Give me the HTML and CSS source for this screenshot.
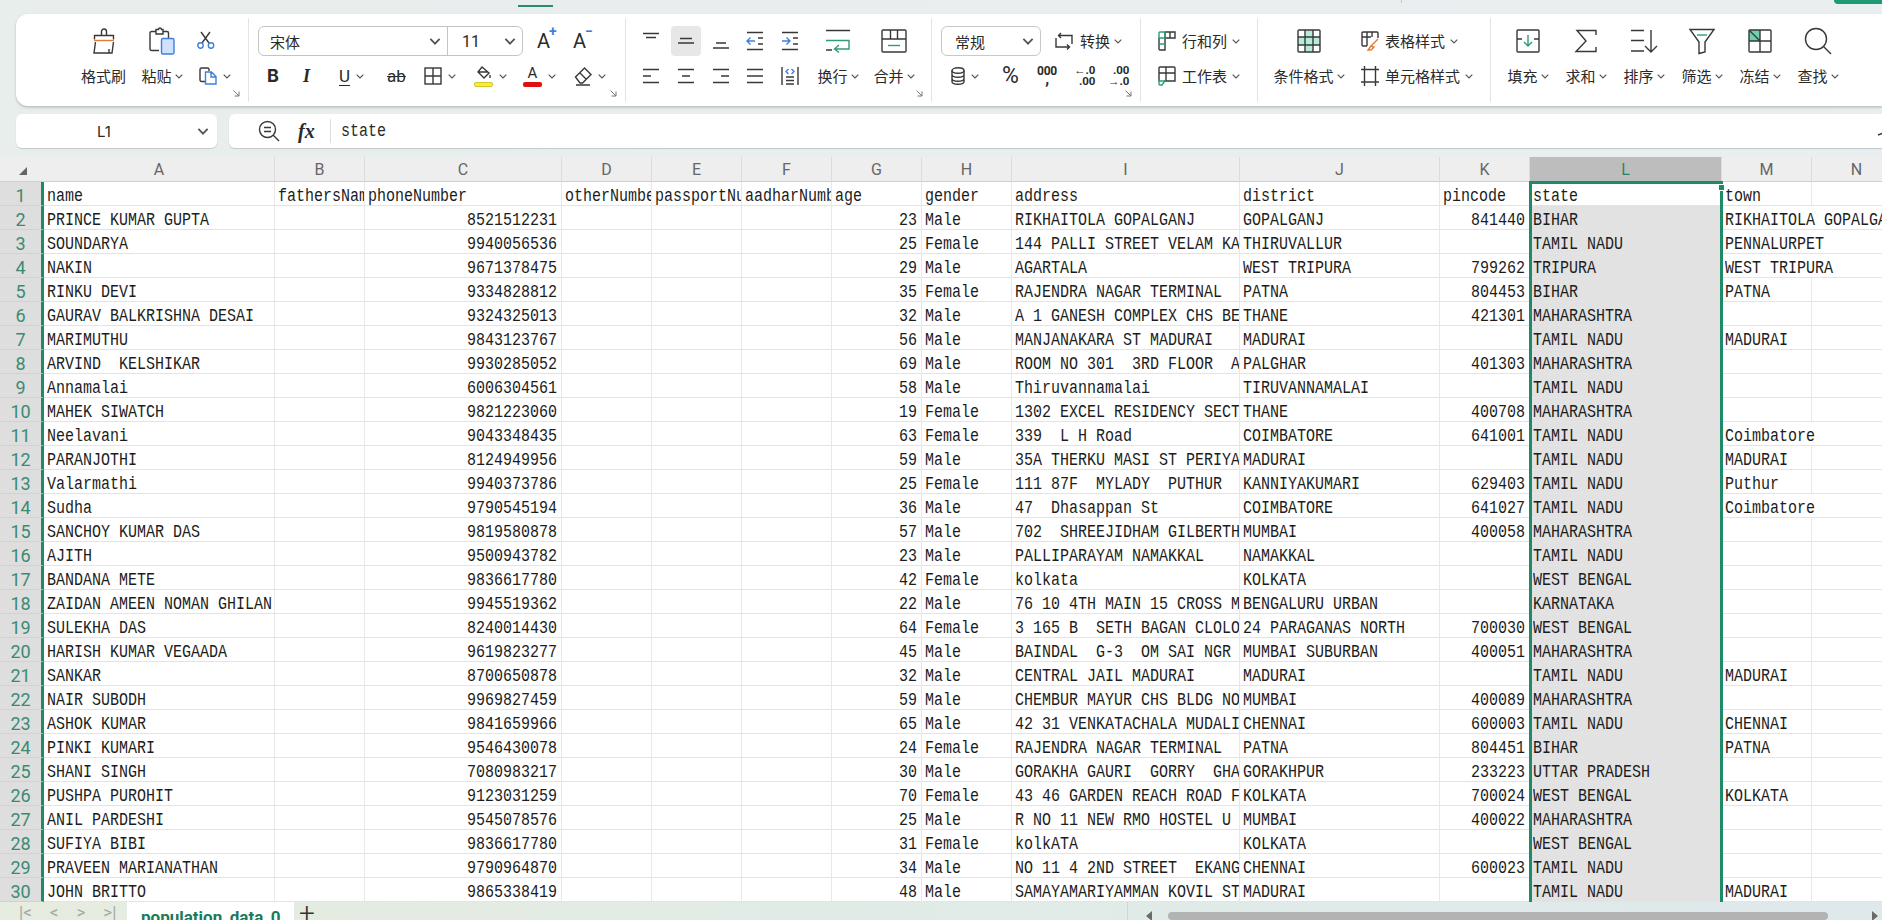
FILE: index.html
```html
<!DOCTYPE html>
<html lang="en">
<head>
<meta charset="utf-8">
<title>population_data_0</title>
<link rel="stylesheet" href="styles.css">
</head>
<body>
<svg class="defs" aria-hidden="true">
  <symbol id="c" viewBox="0 0 8 5"><path d="M.7.7 4 4 7.3.7"/></symbol>
  <symbol id="l" viewBox="0 0 7 7"><path d="M.5.5 6 6M6 1.5V6H1.5"/></symbol>
</svg>
<div class="topstrip"><i class="tabmark"></i><i class="tick"></i><i class="corner"></i></div>

<section class="ribbon">
  <div class="grp g1">
    <svg class="ic" width="24" height="26" viewBox="0 0 24 26"><path d="M9.5 7V3.5a2.5 2.5 0 0 1 5 0V7M2.5 11.500V7.500h19V11.500M3.500 14 2 25h15v-4M17 25h3l1.500-11"/><path class="or" d="M2 12.500h20"/></svg>
    <svg class="ic" width="26" height="28" viewBox="0 0 26 28"><path d="M10 23.500H2.500a1.500 1.500 0 0 1-1.500-1.500V6a1.500 1.500 0 0 1 1.500-1.500H7M14 4.500h4a1.500 1.500 0 0 1 1.500 1.500v5M7 2.500h2.500a1.500 1.500 0 0 1 3 0H14V7H7z"/><rect class="bl" x="12.500" y="11.500" width="12.500" height="15.500" rx="1.500"/></svg>
    <svg class="ic scis" width="18" height="18" viewBox="0 0 18 18"><path d="M4 1l8 11M13 1 5 12"/><circle class="bs" cx="3.500" cy="14.500" r="2.700"/><circle class="bs" cx="14" cy="14.500" r="2.700"/></svg>
    <span class="lb">格式刷</span>
    <span class="it"><span class="lb">粘贴</span><svg class="ch"><use href="#c"/></svg></span>
    <span class="it i7"><svg class="ic" width="18" height="18" viewBox="0 0 18 18"><path d="M7 14.500H2.500A1.500 1.500 0 0 1 1 13V2.500A1.500 1.500 0 0 1 2.500 1h6A1.500 1.500 0 0 1 10 2.500V4"/><path class="bs" d="M6.500 5h6l4.500 4.500V17H6.500zM12 5v5h5"/></svg><svg class="ch"><use href="#c"/></svg></span>
    <svg class="lau"><use href="#l"/></svg>
  </div>

  <div class="grp g2">
    <div class="rw r1">
      <div class="combo"><span class="cf">宋体<svg class="cb"><use href="#c"/></svg></span><span class="cs">11<svg class="cb"><use href="#c"/></svg></span></div>
      <span class="aa">A<sup class="bt">+</sup></span><span class="aa am">A<sup class="bt">−</sup></span>
    </div>
    <div class="rw r2">
      <span class="tb bold">B</span>
      <span class="tb ital">I</span>
      <span class="it"><span class="tb under">U</span><svg class="ch"><use href="#c"/></svg></span>
      <span class="tb strike">ab</span>
      <span class="it"><svg class="ic" width="18" height="18" viewBox="0 0 18 18"><rect x="1" y="1" width="16" height="16"/><path d="M9 1v16M1 9h16"/></svg><svg class="ch"><use href="#c"/></svg></span>
      <span class="it"><span class="barred"><svg class="ic" width="16" height="14" viewBox="0 0 16 14"><path d="M6 1l7 6-5 5-6-6zM3 6h9"/><path d="M14 9v3"/></svg><i class="bar yl"></i></span><svg class="ch"><use href="#c"/></svg></span>
      <span class="it"><span class="barred"><span class="fa">A</span><i class="bar rd"></i></span><svg class="ch"><use href="#c"/></svg></span>
      <span class="it"><svg class="ic" width="18" height="20" viewBox="0 0 18 20"><path d="M1.500 11 10.500 2 17 8.500 8.500 17H6zM5.500 6.500 12.500 13.500M2 19h14"/></svg><svg class="ch"><use href="#c"/></svg></span>
    </div>
    <svg class="lau"><use href="#l"/></svg>
  </div>

  <div class="grp g3">
    <svg class="ic" width="18" height="18" viewBox="0 0 18 18"><path d="M1 1.500h16M4 5.500h10"/></svg>
    <span class="hl"><svg class="ic" width="18" height="18" viewBox="0 0 18 18"><path d="M3 6.500h12M1 11h16"/></svg></span>
    <svg class="ic" width="18" height="18" viewBox="0 0 18 18"><path d="M4 11h10M1 16h16"/></svg>
    <svg class="ic" width="18" height="20" viewBox="0 0 18 20"><path d="M1 1.500h16M1 18.500h16M12 7h5M12 13h5"/><path class="bs" d="M9 10H1M4.500 6.500 1 10l3.500 3.500"/></svg>
    <svg class="ic" width="18" height="20" viewBox="0 0 18 20"><path d="M1 1.500h16M1 18.500h16M12 7h5M12 13h5"/><path class="bs" d="M1 10h8M5.500 6.500 9 10l-3.500 3.500"/></svg>
    <svg class="ic" width="26" height="24" viewBox="0 0 26 24"><path d="M1 1.500h24M1 21h6"/><path class="gr" d="M1 11.500h23V20H10M14 16l-4.500 4 4.500 3.500"/></svg>
    <svg class="ic" width="26" height="24" viewBox="0 0 26 24"><rect x="1" y="1" width="24" height="22" rx="1"/><path d="M1 10h24M9.500 1v9M16.500 1v9"/><path class="gr" d="M7 16.500h12"/></svg>

    <svg class="ic" width="18" height="16" viewBox="0 0 18 16"><path d="M1 1.500h16M1 8h8M1 14.500h16"/></svg>
    <svg class="ic" width="18" height="16" viewBox="0 0 18 16"><path d="M1 1.500h16M5 8h8M1 14.500h16"/></svg>
    <svg class="ic" width="18" height="16" viewBox="0 0 18 16"><path d="M1 1.500h16M9 8h8M1 14.500h16"/></svg>
    <svg class="ic" width="18" height="16" viewBox="0 0 18 16"><path d="M1 1.500h16M1 8h16M1 14.500h16"/></svg>
    <svg class="ic" width="18" height="18" viewBox="0 0 18 18"><path d="M1 0v18M17 0v18M5 10h8M5 13.500h8M5 17h8"/><path class="bs" d="M7.500 2 5 4.500 7.500 7M10.500 2 13 4.500 10.500 7"/></svg>
    <span class="it"><span class="lb">换行</span><svg class="ch"><use href="#c"/></svg></span>
    <span class="it"><span class="lb">合并</span><svg class="ch"><use href="#c"/></svg></span>
    <svg class="lau"><use href="#l"/></svg>
  </div>

  <div class="grp g4">
    <div class="rw r1">
      <div class="sel"><span>常规</span><svg class="cb"><use href="#c"/></svg></div>
      <svg class="ic conv" width="18" height="18" viewBox="0 0 18 18"><path d="M4 3.500h13V12M14 15H1V6M6 1 3.500 3.500 6 6M12 12.500 14.500 15 12 17.500"/></svg>
      <span class="lb">转换</span><svg class="ch"><use href="#c"/></svg>
    </div>
    <div class="rw r2">
      <span class="it"><svg class="ic" width="14" height="18" viewBox="0 0 14 18"><ellipse cx="7" cy="3.500" rx="6" ry="2.700"/><path d="M1 3.500v11c0 1.500 2.700 2.700 6 2.700s6-1.200 6-2.700v-11M1 7.500c0 1.500 2.700 2.700 6 2.700s6-1.200 6-2.700M1 11.500c0 1.500 2.700 2.700 6 2.700s6-1.200 6-2.700"/></svg><svg class="ch"><use href="#c"/></svg></span>
      <span class="pc">%</span>
      <span class="th">000<em>,</em></span>
      <span class="dc">←.0<br>.00</span>
      <span class="dc">.00<br>→.0</span>
    </div>
    <svg class="lau"><use href="#l"/></svg>
  </div>

  <div class="grp g5">
    <div class="rw"><svg class="ic" width="18" height="20" viewBox="0 0 18 20"><path d="M7 7h10V1H7M7 1v18H2a1 1 0 0 1-1-1V7M12 1v6"/><path class="gr" d="M1 7V2a1 1 0 0 1 1-1h5v6zM1 13h6"/></svg><span class="lb">行和列</span><svg class="ch"><use href="#c"/></svg></div>
    <div class="rw"><svg class="ic" width="18" height="20" viewBox="0 0 18 20"><path d="M6 15h11V2a1 1 0 0 0-1-1H2a1 1 0 0 0-1 1v13M1 7h16M8 1v14"/><path class="gr" d="M1 15v3a1 1 0 0 0 1 1h2l3-4z"/></svg><span class="lb">工作表</span><svg class="ch"><use href="#c"/></svg></div>
  </div>

  <div class="grp g6">
    <svg class="ic" width="24" height="24" viewBox="0 0 24 24"><path class="mt" d="M8 1h8v7h7v8h-7v7H8v-7H1V8h7z"/><rect x="1" y="1" width="22" height="22" rx="1"/><path d="M1 8h22M1 16h22M8 1v22M16 1v22"/></svg>
    <div class="rw"><svg class="ic" width="18" height="20" viewBox="0 0 18 20"><path d="M6 15H2a1 1 0 0 1-1-1V2a1 1 0 0 1 1-1h14a1 1 0 0 1 1 1v5M1 6h9M6 1v14M11 1v5"/><path class="or" d="M17 8 10 15M10 15l-3 4h3l3-3z"/></svg><span class="lb">表格样式</span><svg class="ch"><use href="#c"/></svg></div>
    <span class="it"><span class="lb">条件格式</span><svg class="ch"><use href="#c"/></svg></span>
    <div class="rw"><svg class="ic" width="18" height="20" viewBox="0 0 18 20"><path d="M0 3.500h18M0 16h18M3.500 0v20M14.500 0v20"/></svg><span class="lb">单元格样式</span><svg class="ch"><use href="#c"/></svg></div>
  </div>

  <div class="grp g7">
    <svg class="ic" width="24" height="24" viewBox="0 0 24 24"><rect x="1" y="1" width="22" height="22" rx="1"/><path d="M1 10h5M18 10h5"/><path class="gr" d="M12 6v11M8 13l4 4 4-4"/></svg>
    <svg class="ic" width="22" height="24" viewBox="0 0 22 24"><path d="M21 6V1.500H2L11 12 1 22.500h20V18"/></svg>
    <svg class="ic" width="28" height="24" viewBox="0 0 28 24"><path d="M1 1.500h13M1 11.500h13M1 22h13M21 1v22M15 17l6 6 6-6"/></svg>
    <svg class="ic" width="26" height="26" viewBox="0 0 26 26"><path d="M1 1.500h24L16 14v10l-6 1.500V14z"/><path class="gr" d="M8 7h10"/></svg>
    <svg class="ic" width="24" height="24" viewBox="0 0 24 24"><path class="fz" d="M1 1h11v11H1z"/><rect x="1" y="1" width="22" height="22" rx="1"/><path d="M1 12h22M12 1v22M1 1l11 11"/></svg>
    <svg class="ic" width="28" height="28" viewBox="0 0 28 28"><circle cx="12" cy="12" r="10.500"/><path d="M19.500 19.500 27 27"/></svg>
    <span class="it"><span class="lb">填充</span><svg class="ch"><use href="#c"/></svg></span>
    <span class="it"><span class="lb">求和</span><svg class="ch"><use href="#c"/></svg></span>
    <span class="it"><span class="lb">排序</span><svg class="ch"><use href="#c"/></svg></span>
    <span class="it"><span class="lb">筛选</span><svg class="ch"><use href="#c"/></svg></span>
    <span class="it"><span class="lb">冻结</span><svg class="ch"><use href="#c"/></svg></span>
    <span class="it"><span class="lb">查找</span><svg class="ch"><use href="#c"/></svg></span>
  </div>
</section>

<section class="fbar">
  <div class="namebox"><span class="nm">L1</span><svg class="cb"><use href="#c"/></svg></div>
  <div class="formula">
    <svg class="ic" width="22" height="22" viewBox="0 0 22 22"><circle cx="9.500" cy="9.500" r="8"/><path d="M15 15l6 6M6 7.500h7M6 11.500h7"/></svg>
    <span class="fx">fx</span>
    <span class="fval"><span>state</span></span>
    <svg class="fend ic" width="8" height="14" viewBox="0 0 8 14"><path d="M6 1v9M1 12l5-2"/></svg>
  </div>
</section>

<section class="sheet">
<table>
<colgroup><col class="w44"><col class="w231"><col class="w90"><col class="w197"><col class="w90"><col class="w90"><col class="w90"><col class="w90"><col class="w90"><col class="w228"><col class="w200"><col class="w90"><col class="w192"><col class="w90"><col class="w90"></colgroup>
<thead><tr><th class="cnr"><i></i></th><th>A</th><th>B</th><th>C</th><th>D</th><th>E</th><th>F</th><th>G</th><th>H</th><th>I</th><th>J</th><th>K</th><th class="on">L</th><th>M</th><th>N</th></tr></thead>
<tbody>
<tr class="hd"><th>1</th><td><span>name</span></td><td><span>fathersName</span></td><td><span>phoneNumber</span></td><td><span>otherNumber</span></td><td><span>passportNumber</span></td><td><span>aadharNumber</span></td><td><span>age</span></td><td><span>gender</span></td><td><span>address</span></td><td><span>district</span></td><td><span>pincode</span></td><td><span>state</span></td><td><span>town</span></td><td></td></tr>
<tr><th>2</th><td><span>PRINCE KUMAR GUPTA</span></td><td></td><td><span>8521512231</span></td><td></td><td></td><td></td><td><span>23</span></td><td><span>Male</span></td><td><span>RIKHAITOLA GOPALGANJ</span></td><td><span>GOPALGANJ</span></td><td><span>841440</span></td><td><span>BIHAR</span></td><td colspan="2"><span>RIKHAITOLA GOPALGANJ</span></td></tr>
<tr><th>3</th><td><span>SOUNDARYA</span></td><td></td><td><span>9940056536</span></td><td></td><td></td><td></td><td><span>25</span></td><td><span>Female</span></td><td><span>144 PALLI STREET VELAM KANCHIPURAM</span></td><td><span>THIRUVALLUR</span></td><td></td><td><span>TAMIL NADU</span></td><td colspan="2"><span>PENNALURPET</span></td></tr>
<tr><th>4</th><td><span>NAKIN</span></td><td></td><td><span>9671378475</span></td><td></td><td></td><td></td><td><span>29</span></td><td><span>Male</span></td><td><span>AGARTALA</span></td><td><span>WEST TRIPURA</span></td><td><span>799262</span></td><td><span>TRIPURA</span></td><td colspan="2"><span>WEST TRIPURA</span></td></tr>
<tr><th>5</th><td><span>RINKU DEVI</span></td><td></td><td><span>9334828812</span></td><td></td><td></td><td></td><td><span>35</span></td><td><span>Female</span></td><td><span>RAJENDRA NAGAR TERMINAL</span></td><td><span>PATNA</span></td><td><span>804453</span></td><td><span>BIHAR</span></td><td><span>PATNA</span></td><td></td></tr>
<tr><th>6</th><td><span>GAURAV BALKRISHNA DESAI</span></td><td></td><td><span>9324325013</span></td><td></td><td></td><td></td><td><span>32</span></td><td><span>Male</span></td><td><span>A 1 GANESH COMPLEX CHS BEHIND</span></td><td><span>THANE</span></td><td><span>421301</span></td><td><span>MAHARASHTRA</span></td><td></td><td></td></tr>
<tr><th>7</th><td><span>MARIMUTHU</span></td><td></td><td><span>9843123767</span></td><td></td><td></td><td></td><td><span>56</span></td><td><span>Male</span></td><td><span>MANJANAKARA ST MADURAI</span></td><td><span>MADURAI</span></td><td></td><td><span>TAMIL NADU</span></td><td><span>MADURAI</span></td><td></td></tr>
<tr><th>8</th><td><span>ARVIND  KELSHIKAR</span></td><td></td><td><span>9930285052</span></td><td></td><td></td><td></td><td><span>69</span></td><td><span>Male</span></td><td><span>ROOM NO 301  3RD FLOOR  A WING</span></td><td><span>PALGHAR</span></td><td><span>401303</span></td><td><span>MAHARASHTRA</span></td><td></td><td></td></tr>
<tr><th>9</th><td><span>Annamalai</span></td><td></td><td><span>6006304561</span></td><td></td><td></td><td></td><td><span>58</span></td><td><span>Male</span></td><td><span>Thiruvannamalai</span></td><td><span>TIRUVANNAMALAI</span></td><td></td><td><span>TAMIL NADU</span></td><td></td><td></td></tr>
<tr><th>10</th><td><span>MAHEK SIWATCH</span></td><td></td><td><span>9821223060</span></td><td></td><td></td><td></td><td><span>19</span></td><td><span>Female</span></td><td><span>1302 EXCEL RESIDENCY SECTOR</span></td><td><span>THANE</span></td><td><span>400708</span></td><td><span>MAHARASHTRA</span></td><td></td><td></td></tr>
<tr><th>11</th><td><span>Neelavani</span></td><td></td><td><span>9043348435</span></td><td></td><td></td><td></td><td><span>63</span></td><td><span>Female</span></td><td><span>339  L H Road</span></td><td><span>COIMBATORE</span></td><td><span>641001</span></td><td><span>TAMIL NADU</span></td><td colspan="2"><span>Coimbatore</span></td></tr>
<tr><th>12</th><td><span>PARANJOTHI</span></td><td></td><td><span>8124949956</span></td><td></td><td></td><td></td><td><span>59</span></td><td><span>Male</span></td><td><span>35A THERKU MASI ST PERIYAR</span></td><td><span>MADURAI</span></td><td></td><td><span>TAMIL NADU</span></td><td><span>MADURAI</span></td><td></td></tr>
<tr><th>13</th><td><span>Valarmathi</span></td><td></td><td><span>9940373786</span></td><td></td><td></td><td></td><td><span>25</span></td><td><span>Female</span></td><td><span>111 87F  MYLADY  PUTHUR</span></td><td><span>KANNIYAKUMARI</span></td><td><span>629403</span></td><td><span>TAMIL NADU</span></td><td><span>Puthur</span></td><td></td></tr>
<tr><th>14</th><td><span>Sudha</span></td><td></td><td><span>9790545194</span></td><td></td><td></td><td></td><td><span>36</span></td><td><span>Male</span></td><td><span>47  Dhasappan St</span></td><td><span>COIMBATORE</span></td><td><span>641027</span></td><td><span>TAMIL NADU</span></td><td colspan="2"><span>Coimbatore</span></td></tr>
<tr><th>15</th><td><span>SANCHOY KUMAR DAS</span></td><td></td><td><span>9819580878</span></td><td></td><td></td><td></td><td><span>57</span></td><td><span>Male</span></td><td><span>702  SHREEJIDHAM GILBERTHILL</span></td><td><span>MUMBAI</span></td><td><span>400058</span></td><td><span>MAHARASHTRA</span></td><td></td><td></td></tr>
<tr><th>16</th><td><span>AJITH</span></td><td></td><td><span>9500943782</span></td><td></td><td></td><td></td><td><span>23</span></td><td><span>Male</span></td><td><span>PALLIPARAYAM NAMAKKAL</span></td><td><span>NAMAKKAL</span></td><td></td><td><span>TAMIL NADU</span></td><td></td><td></td></tr>
<tr><th>17</th><td><span>BANDANA METE</span></td><td></td><td><span>9836617780</span></td><td></td><td></td><td></td><td><span>42</span></td><td><span>Female</span></td><td><span>kolkata</span></td><td><span>KOLKATA</span></td><td></td><td><span>WEST BENGAL</span></td><td></td><td></td></tr>
<tr><th>18</th><td><span>ZAIDAN AMEEN NOMAN GHILAN</span></td><td></td><td><span>9945519362</span></td><td></td><td></td><td></td><td><span>22</span></td><td><span>Male</span></td><td><span>76 10 4TH MAIN 15 CROSS MALLESWARAM</span></td><td><span>BENGALURU URBAN</span></td><td></td><td><span>KARNATAKA</span></td><td></td><td></td></tr>
<tr><th>19</th><td><span>SULEKHA DAS</span></td><td></td><td><span>8240014430</span></td><td></td><td></td><td></td><td><span>64</span></td><td><span>Female</span></td><td><span>3 165 B  SETH BAGAN CLOLONY</span></td><td><span>24 PARAGANAS NORTH</span></td><td><span>700030</span></td><td><span>WEST BENGAL</span></td><td></td><td></td></tr>
<tr><th>20</th><td><span>HARISH KUMAR VEGAADA</span></td><td></td><td><span>9619823277</span></td><td></td><td></td><td></td><td><span>45</span></td><td><span>Male</span></td><td><span>BAINDAL  G-3  OM SAI NGR</span></td><td><span>MUMBAI SUBURBAN</span></td><td><span>400051</span></td><td><span>MAHARASHTRA</span></td><td></td><td></td></tr>
<tr><th>21</th><td><span>SANKAR</span></td><td></td><td><span>8700650878</span></td><td></td><td></td><td></td><td><span>32</span></td><td><span>Male</span></td><td><span>CENTRAL JAIL MADURAI</span></td><td><span>MADURAI</span></td><td></td><td><span>TAMIL NADU</span></td><td><span>MADURAI</span></td><td></td></tr>
<tr><th>22</th><td><span>NAIR SUBODH</span></td><td></td><td><span>9969827459</span></td><td></td><td></td><td></td><td><span>59</span></td><td><span>Male</span></td><td><span>CHEMBUR MAYUR CHS BLDG NO 5</span></td><td><span>MUMBAI</span></td><td><span>400089</span></td><td><span>MAHARASHTRA</span></td><td></td><td></td></tr>
<tr><th>23</th><td><span>ASHOK KUMAR</span></td><td></td><td><span>9841659966</span></td><td></td><td></td><td></td><td><span>65</span></td><td><span>Male</span></td><td><span>42 31 VENKATACHALA MUDALI ST</span></td><td><span>CHENNAI</span></td><td><span>600003</span></td><td><span>TAMIL NADU</span></td><td><span>CHENNAI</span></td><td></td></tr>
<tr><th>24</th><td><span>PINKI KUMARI</span></td><td></td><td><span>9546430078</span></td><td></td><td></td><td></td><td><span>24</span></td><td><span>Female</span></td><td><span>RAJENDRA NAGAR TERMINAL</span></td><td><span>PATNA</span></td><td><span>804451</span></td><td><span>BIHAR</span></td><td><span>PATNA</span></td><td></td></tr>
<tr><th>25</th><td><span>SHANI SINGH</span></td><td></td><td><span>7080983217</span></td><td></td><td></td><td></td><td><span>30</span></td><td><span>Male</span></td><td><span>GORAKHA GAURI  GORRY  GHAT ROAD</span></td><td><span>GORAKHPUR</span></td><td><span>233223</span></td><td><span>UTTAR PRADESH</span></td><td></td><td></td></tr>
<tr><th>26</th><td><span>PUSHPA PUROHIT</span></td><td></td><td><span>9123031259</span></td><td></td><td></td><td></td><td><span>70</span></td><td><span>Female</span></td><td><span>43 46 GARDEN REACH ROAD FLAT</span></td><td><span>KOLKATA</span></td><td><span>700024</span></td><td><span>WEST BENGAL</span></td><td><span>KOLKATA</span></td><td></td></tr>
<tr><th>27</th><td><span>ANIL PARDESHI</span></td><td></td><td><span>9545078576</span></td><td></td><td></td><td></td><td><span>25</span></td><td><span>Male</span></td><td><span>R NO 11 NEW RMO HOSTEL U</span></td><td><span>MUMBAI</span></td><td><span>400022</span></td><td><span>MAHARASHTRA</span></td><td></td><td></td></tr>
<tr><th>28</th><td><span>SUFIYA BIBI</span></td><td></td><td><span>9836617780</span></td><td></td><td></td><td></td><td><span>31</span></td><td><span>Female</span></td><td><span>kolkATA</span></td><td><span>KOLKATA</span></td><td></td><td><span>WEST BENGAL</span></td><td></td><td></td></tr>
<tr><th>29</th><td><span>PRAVEEN MARIANATHAN</span></td><td></td><td><span>9790964870</span></td><td></td><td></td><td></td><td><span>34</span></td><td><span>Male</span></td><td><span>NO 11 4 2ND STREET  EKANGIPURAM</span></td><td><span>CHENNAI</span></td><td><span>600023</span></td><td><span>TAMIL NADU</span></td><td></td><td></td></tr>
<tr><th>30</th><td><span>JOHN BRITTO</span></td><td></td><td><span>9865338419</span></td><td></td><td></td><td></td><td><span>48</span></td><td><span>Male</span></td><td><span>SAMAYAMARIYAMMAN KOVIL STREET</span></td><td><span>MADURAI</span></td><td></td><td><span>TAMIL NADU</span></td><td><span>MADURAI</span></td><td></td></tr>
</tbody>
</table>
<div class="selbox"><i></i></div>
</section>

<footer class="tabs">
  <div class="nav"><span>|&lt;</span><span>&lt;</span><span>&gt;</span><span>&gt;|</span></div>
  <div class="tab">population_data_0</div>
  <span class="plus">+</span>
  <i class="vsep"></i>
  <i class="arr al"></i>
  <div class="track"><i class="thumb"></i></div>
  <i class="arr ar"></i>
</footer>
</body>
</html>
```
FILE: styles.css
```css
*{box-sizing:border-box}
html,body{margin:0;height:100%}
body{width:1882px;height:920px;overflow:hidden;background:linear-gradient(90deg,#e8eeec,#e9eef0);font-family:"Noto Sans CJK SC","Noto Sans",sans-serif;color:#2a2a2a}
.defs{display:none}

.topstrip{height:14px;display:flex;align-items:flex-start}
.tabmark{width:35px;height:2px;margin:5px 0 0 518px;background:#2a8c6c}
.tick{width:1px;height:3px;margin-left:848px;background:#c4c8c8}
.corner{width:48px;height:4px;margin-left:432px;background:#1f9a72;border-bottom-left-radius:5px}

.ribbon{height:92px;margin-left:16px;display:flex;background:#fff;border-radius:12px 0 0 12px;box-shadow:0 1px 2px #bcc2c0,0 2px 3px #d0d5d3}
.grp{position:relative;margin-top:4px;height:84px;padding-top:8px;border-right:1px solid #e2e4e4;display:grid;grid-template-rows:30px 30px;row-gap:5px;align-items:center;justify-items:center}
.g1{width:233px;padding-left:64px;grid-template-columns:47px 48px 35px;column-gap:11px}
.g2{width:377px;display:block;justify-items:stretch}
.g3{width:306px;padding-left:7px;grid-template-columns:35px 35px 35px 33px 37px 60px 52px}
.g4{width:209px;display:block;justify-items:stretch}
.g5{width:117px;padding-left:17px;justify-items:start}
.g6{width:233px;padding-left:7px;grid-template-columns:88px auto;justify-content:start}
.g6 .rw{justify-self:start;margin-left:8px}
.g7{padding-left:8px;grid-template-columns:repeat(6,58px);border-right:0;flex:1;justify-content:start}

.ic{fill:none;stroke:#383838;stroke-width:1.4;flex:none;overflow:visible}
.ic .or{stroke:#e57a35}
.ic .bl{stroke:#3f7fdc;fill:#cfe1fb}
.ic .bs{stroke:#3f7fdc}
.ic .gr{stroke:#2e9c78}
.ic .mt{fill:#b6ecd8;stroke:none}
.ic .fz{fill:#6fcfae;stroke:none}
.scis{justify-self:start;margin-top:-2px}
.i7{justify-self:start;margin-left:2px}
.ch{width:8px;height:5px;fill:none;stroke:#555;stroke-width:1.2;flex:none}
.cb{width:12px;height:7px;fill:none;stroke:#555;stroke-width:1.3;flex:none}
.lau{position:absolute;right:8px;bottom:5px;width:7px;height:7px;fill:none;stroke:#777;stroke-width:1}
.lb{font-size:15px;line-height:20px;white-space:nowrap}
.it{display:flex;align-items:center;gap:3px}
.g1 .i7,.g2 .it,.g4 .r2 .it{gap:6px}
.rw{display:flex;align-items:center}
.g5 .rw .lb,.g6 .rw .lb{margin:0 5px 0 6px}

.g2 .r1,.g4 .r1{height:30px}
.g2 .r1{padding-left:9px}
.combo{width:265px;height:30px;display:flex;border:1px solid #c4c4c4;border-radius:6px;font-size:15px}
.cf{width:189px;padding:0 6px 0 11px;display:flex;align-items:center;justify-content:space-between;border-right:1px solid #c4c4c4}
.cs{flex:1;padding:0 6px 0 14px;display:flex;align-items:center;justify-content:space-between;font-family:Roboto,sans-serif;font-size:16px}
.aa{font:20px/30px Roboto,sans-serif;margin-left:14px;width:20px;position:relative;white-space:nowrap}
.am{margin-left:16px}
.bt{position:absolute;left:12px;top:-3px;font:bold 14px/16px Roboto,sans-serif;color:#3f7fdc;vertical-align:baseline}
.r2{margin-top:5px;height:30px;display:grid;align-items:center;justify-items:start}
.g2 .r2{padding-left:18px;grid-template-columns:36px 36px 48px 37px 50px 49px 51px 32px}
.tb{font:16px/20px Roboto,sans-serif}
.bold{font-weight:700;font-size:18px;font-family:Inter,sans-serif}
.ital{font:italic bold 18px "Liberation Serif",serif}
.under{text-decoration:underline;text-underline-offset:3px;font-size:17px}
.strike{text-decoration:line-through;font-size:17px}
.barred{width:19px;display:flex;flex-direction:column;align-items:center;gap:2px}
.bar{width:19px;height:5px;border-radius:2px}
.yl{background:#f6ee3c;border:1px solid #d2c925}
.rd{background:#e01010}
.fa{font:15px/14px Roboto,sans-serif}

.hl{width:30px;height:30px;border-radius:4px;background:#e7e7e7;display:flex;align-items:center;justify-content:center}

.g4 .r1{padding-left:9px}
.sel{width:100px;height:30px;border:1px solid #c8c8c8;border-radius:6px;display:flex;align-items:center;justify-content:space-between;padding:0 6px 0 13px;font-size:15px}
.conv{margin:0 7px 0 14px}
.g4 .r1 .lb{margin-right:4px}
.g4 .r2{padding-left:19px;grid-template-columns:51px 35px 37px 34px 30px}
.pc{font:23px/24px Roboto,sans-serif}
.th{font:bold 12px/10px Roboto,sans-serif;text-align:center;letter-spacing:-.2px;margin-top:-5px}
.th em{display:block;font:bold 16px/5px Roboto,sans-serif}
.dc{font:bold 11.500px/11px Roboto,sans-serif;text-align:right;white-space:nowrap}

.fbar{height:34px;margin-top:8px;padding-left:16px;display:flex;gap:12px}
.namebox{width:201px;background:#fff;border-radius:6px;box-shadow:0 1px 1px #c6c8c8;display:flex;align-items:center;justify-content:space-between;padding:0 8px 0 81px}
.nm{font:15px Inter,sans-serif}
.formula{flex:1;background:#fff;border-radius:6px 0 0 6px;box-shadow:0 1px 1px #c6c8c8;display:flex;align-items:center;padding-left:29px;position:relative}
.fx{font:italic bold 20px "Liberation Serif",serif;margin-left:18px;width:33px;height:24px;line-height:24px;border-right:1px solid #dcdcdc}
.fval{margin:1px 0 0 10px;font:15px/20px "Liberation Mono",monospace}
.fval span{display:inline-block;transform:scaleY(1.2)}
.fend{position:absolute;right:-3px;top:9px}

.sheet{position:relative;height:745px;margin-top:9px;overflow:hidden}
table{border-collapse:separate;border-spacing:0;table-layout:fixed;width:1902px;font:15px/16px "Liberation Mono",monospace;color:#1c1c1c}
.w44{width:44px}.w231{width:231px}.w90{width:90px}.w197{width:197px}.w228{width:228px}.w200{width:200px}.w192{width:192px}
thead th{height:25px;padding:1px 0 0;background:#eeeeee;border-right:1px solid #dcdcdc;border-bottom:1px solid #cfcfcf;font:16px/23px Roboto,sans-serif;color:#666}
thead th.on{background:#bdbdbd;color:#1f8a68}
.cnr{position:relative;border-right:0}
.cnr i{position:absolute;left:19px;top:10px;border:solid transparent;border-width:0 0 8px 8px;border-bottom-color:#666}
tbody tr{height:24px}
tbody th{padding:5px 0 0;background:#dedede;border-right:3px solid #1f8a68;border-bottom:1px solid #d2d2d2;font:18px/18px Roboto,sans-serif;color:#3c8a72;font-weight:400}
td{padding:7px 4px 0 3px;background:#fff;border-right:1px solid #e8e8e8;border-bottom:1px solid #e4e4e4;overflow:hidden;white-space:pre;height:24px;vertical-align:top}
td span{display:inline-block;transform:scaleY(1.2);transform-origin:50% 40%}
td:nth-child(4),td:nth-child(8),td:nth-child(12){text-align:right}
td:nth-child(13){background:#e2e2e2}
.hd td{text-align:left;background:#fff}
.hd td:nth-child(4),.hd td:nth-child(8),.hd td:nth-child(12){text-align:left}
.hd td:nth-child(13){background:#fff}
.selbox{position:absolute;left:1529px;top:24px;width:194px;bottom:0;border:3px solid #1f8a68;border-bottom:0}
.selbox i{position:absolute;right:-5px;top:0;width:7px;height:7px;background:#1f8a68;border:1px solid #fff}

.tabs{height:18px;display:flex;align-items:flex-start;overflow:hidden;background:linear-gradient(90deg,#e6ecdf,#e1ebe6 45%,#dfe9ec)}
.nav{width:127px;display:flex;gap:18px;padding-left:19px;color:#a4aaa4;font:17px/20px Roboto,sans-serif}
.tab{width:167px;height:18px;background:#fff;padding-left:14px;font:bold 17px/30px Roboto,sans-serif;color:#1a7a5a}
.plus{margin-left:5px;font:300 28px/24px Roboto,sans-serif;color:#333}
.vsep{width:1px;height:18px;margin-left:812px;background:#cfd6d6}
.arr{width:0;height:0;margin-top:9px;border:solid transparent;border-width:5px 0 5px 6px;border-left-color:#6a6a6a}
.al{margin-left:18px;transform:scaleX(-1)}
.track{width:716px;height:18px;padding:10px 0 0 16px}
.thumb{display:block;width:660px;height:8px;border-radius:4px;background:#b2b4b4}
.ar{margin-left:4px}
```
